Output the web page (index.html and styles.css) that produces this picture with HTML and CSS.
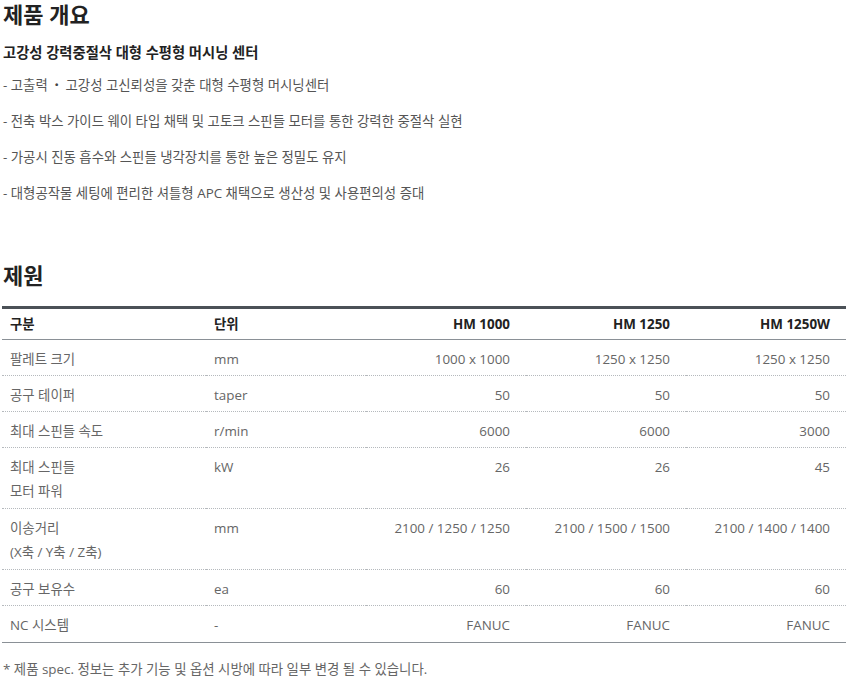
FILE: index.html
```html
<!DOCTYPE html>
<html lang="ko">
<head>
<meta charset="utf-8">
<title>제품 개요</title>
<link rel="stylesheet" href="styles.css">
</head>
<body>
<div class="page">
  <h2 class="title">제품 개요</h2>
  <p class="subtitle">고강성 강력중절삭 대형 수평형 머시닝 센터</p>
  <ul class="features">
    <li>- 고출력 &nbsp;<b class="dot">·</b>&nbsp; 고강성 고신뢰성을 갖춘 대형 수평형 머시닝센터</li>
    <li>- 전축 박스 가이드 웨이 타입 채택 및 고토크 스핀들 모터를 통한 강력한 중절삭 실현</li>
    <li>- 가공시 진동 흡수와 스핀들 냉각장치를 통한 높은 정밀도 유지</li>
    <li>- 대형공작물 세팅에 편리한 셔틀형 APC 채택으로 생산성 및 사용편의성 증대</li>
  </ul>

  <h2 class="title spec-title">제원</h2>
  <table class="spec">
    <colgroup>
      <col class="c-name"><col class="c-unit"><col class="c-val"><col class="c-val"><col class="c-val">
    </colgroup>
    <thead>
      <tr><th>구분</th><th>단위</th><th class="num">HM 1000</th><th class="num">HM 1250</th><th class="num">HM 1250W</th></tr>
    </thead>
    <tbody>
      <tr><td>팔레트 크기</td><td>mm</td><td class="num">1000 x 1000</td><td class="num">1250 x 1250</td><td class="num">1250 x 1250</td></tr>
      <tr><td>공구 테이퍼</td><td>taper</td><td class="num">50</td><td class="num">50</td><td class="num">50</td></tr>
      <tr><td>최대 스핀들 속도</td><td>r/min</td><td class="num">6000</td><td class="num">6000</td><td class="num">3000</td></tr>
      <tr class="two"><td>최대 스핀들<br>모터 파워</td><td>kW</td><td class="num">26</td><td class="num">26</td><td class="num">45</td></tr>
      <tr class="two"><td>이송거리<br>(X축 / Y축 / Z축)</td><td>mm</td><td class="num">2100 / 1250 / 1250</td><td class="num">2100 / 1500 / 1500</td><td class="num">2100 / 1400 / 1400</td></tr>
      <tr><td>공구 보유수</td><td>ea</td><td class="num">60</td><td class="num">60</td><td class="num">60</td></tr>
      <tr class="last"><td>NC 시스템</td><td>-</td><td class="num">FANUC</td><td class="num">FANUC</td><td class="num">FANUC</td></tr>
    </tbody>
  </table>
  <p class="note">* 제품 spec. 정보는 추가 기능 및 옵션 시방에 따라 일부 변경 될 수 있습니다.</p>
</div>
</body>
</html>
```

FILE: styles.css
```css
html, body {
  margin: 0;
  padding: 0;
  background: #fff;
}
body {
  font-family: "Open Sans", "Noto Sans CJK KR", sans-serif;
  color: #555;
}
.page {
  padding: 0 4px 0 2px;
}
.title {
  margin: 0;
  font-size: 22px;
  line-height: 28px;
  font-weight: 700;
  color: #222;
  padding-left: 1px;
}
.subtitle {
  margin: 15px 0 0;
  font-size: 14.3px;
  line-height: 20px;
  font-weight: 700;
  color: #222;
  padding-left: 1px;
}
.features {
  list-style: none;
  margin: 12px 0 0;
  padding: 0;
}
.features li {
  font-size: 13.4px;
  line-height: 20px;
  color: #555;
  margin-bottom: 16px;
  padding-left: 1px;
}
.features li:last-child {
  margin-bottom: 0;
}
.dot {
  font-weight: 900;
  color: #444;
}
.spec-title {
  margin-top: 58px;
}
.spec {
  margin-top: 17px;
  width: 844px;
  border-collapse: collapse;
  table-layout: fixed;
  border-top: 3px solid #4b5157;
  border-bottom: 1px solid #8a9096;
}
.c-name { width: 204px; }
.c-unit { width: 160px; }
.c-val { width: 160px; }
.spec th {
  font-size: 13.4px;
  font-weight: 700;
  color: #222;
  text-align: left;
  line-height: 20px;
  padding: 5px 16px 5px 8px;
  border-bottom: 1px solid #8a9096;
}
.spec td {
  font-size: 13.4px;
  color: #666;
  line-height: 24px;
  padding: 7px 16px 4px 8px;
  vertical-align: top;
  border-bottom: 1px dotted #b5b9bd;
}
.spec .two td {
  padding-bottom: 5px;
}
.spec .last td {
  border-bottom: none;
  padding-bottom: 5px;
}
.spec .num {
  text-align: right;
}
.note {
  margin: 16px 0 0;
  font-size: 13.4px;
  line-height: 20px;
  color: #666;
  padding-left: 1px;
}
```
